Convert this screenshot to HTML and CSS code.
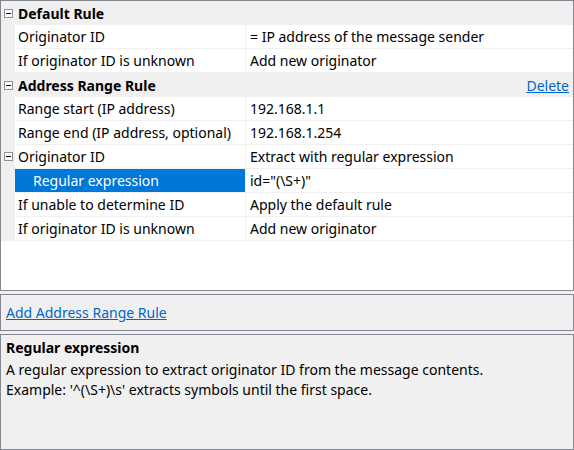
FILE: index.html
```html
<!DOCTYPE html>
<html>
<head>
<meta charset="utf-8">
<link rel="stylesheet" href="styles.css">
</head>
<body>
<div class="page">
  <div class="grid">
    <div class="row header">
      <span class="gutter"><span class="expander"></span></span>
      <span class="title">Default Rule</span>
    </div>
    <div class="row">
      <span class="gutter"></span>
      <span class="name">Originator ID</span>
      <span class="value">= IP address of the message sender</span>
    </div>
    <div class="row">
      <span class="gutter"></span>
      <span class="name">If originator ID is unknown</span>
      <span class="value">Add new originator</span>
    </div>
    <div class="row header">
      <span class="gutter"><span class="expander"></span></span>
      <span class="title">Address Range Rule</span>
      <a class="link delete" href="#">Delete</a>
    </div>
    <div class="row">
      <span class="gutter"></span>
      <span class="name">Range start (IP address)</span>
      <span class="value">192.168.1.1</span>
    </div>
    <div class="row">
      <span class="gutter"></span>
      <span class="name">Range end (IP address, optional)</span>
      <span class="value">192.168.1.254</span>
    </div>
    <div class="row">
      <span class="gutter"><span class="expander"></span></span>
      <span class="name">Originator ID</span>
      <span class="value">Extract with regular expression</span>
    </div>
    <div class="row">
      <span class="gutter"></span>
      <span class="name selected">Regular expression</span>
      <span class="value">id="(\S+)"</span>
    </div>
    <div class="row">
      <span class="gutter"></span>
      <span class="name">If unable to determine ID</span>
      <span class="value">Apply the default rule</span>
    </div>
    <div class="row">
      <span class="gutter"></span>
      <span class="name">If originator ID is unknown</span>
      <span class="value">Add new originator</span>
    </div>
  </div>
  <div class="panel actions">
    <a class="link" href="#">Add Address Range Rule</a>
  </div>
  <div class="panel help">
    <div class="help-title">Regular expression</div>
    <div class="help-text">A regular expression to extract originator ID from the message contents.</div>
    <div class="help-text">Example: '^(\S+)\s' extracts symbols until the first space.</div>
  </div>
</div>
</body>
</html>
```
FILE: styles.css
```css
html, body {
  margin: 0;
  padding: 0;
  background: #f0f0f0;
}
body {
  font-family: "Noto Sans", "Open Sans", sans-serif;
  font-size: 14px;
  color: #000;
}
.page {
  width: 574px;
  height: 450px;
  display: flex;
  flex-direction: column;
  gap: 3px;
}
.grid {
  box-sizing: border-box;
  height: 291px;
  border: 1px solid #828790;
  background: #fff;
  display: flex;
  flex-direction: column;
}
.row {
  display: flex;
  height: 24px;
  flex: none;
  box-sizing: border-box;
  border-bottom: 1px solid #f0f0f0;
  align-items: stretch;
}
.row.header {
  background: #f0f0f0;
  border-bottom: none;
  align-items: center;
}
.gutter {
  width: 14px;
  flex: none;
  background: #f0f0f0;
  display: flex;
  align-items: center;
  justify-content: center;
  align-self: stretch;
}
.expander {
  box-sizing: border-box;
  width: 9px;
  height: 9px;
  border: 1px solid #919191;
  background: #fff;
  position: relative;
}
.expander::after {
  content: "";
  position: absolute;
  left: 1px;
  right: 1px;
  top: 3px;
  height: 1px;
  background: #000;
}
.title {
  font-weight: bold;
  padding-left: 3px;
  flex: 1;
}
.name {
  box-sizing: border-box;
  width: 231px;
  flex: none;
  padding-left: 3px;
  border-right: 1px solid #f0f0f0;
  display: flex;
  align-items: center;
  white-space: nowrap;
}
.name.selected {
  background: #0078d7;
  color: #fff;
  padding-left: 18px;
}
.value {
  flex: 1;
  padding-left: 4px;
  display: flex;
  align-items: center;
  white-space: nowrap;
}
.link {
  color: #0066cc;
  text-decoration: underline;
}
.delete {
  margin-right: 4px;
}
.panel {
  box-sizing: border-box;
  border: 1px solid #828790;
  background: #f0f0f0;
}
.actions {
  height: 37px;
  display: flex;
  align-items: center;
  padding-left: 5px;
}
.help {
  height: 116px;
  padding: 3px 5px;
}
.help-title {
  font-weight: bold;
  line-height: 20px;
  margin-bottom: 2px;
}
.help-text {
  line-height: 20px;
}
```
